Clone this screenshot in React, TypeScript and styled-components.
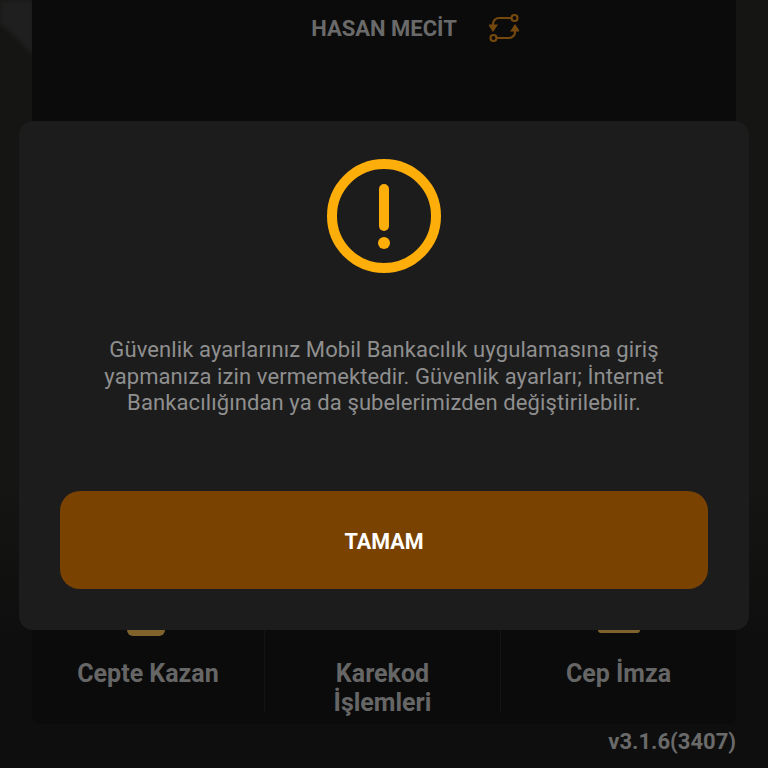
import React from "react";
import styled, { createGlobalStyle } from "styled-components";

const GlobalStyle = createGlobalStyle`
  html, body {
    margin: 0;
    padding: 0;
    background: #0e0e0e;
  }
  * {
    box-sizing: border-box;
  }
`;

const Screen = styled.div`
  position: relative;
  width: 768px;
  height: 768px;
  overflow: hidden;
  background: linear-gradient(to bottom, #151513 0, #151513 480px, #0e0e0e 640px);
  font-family: Roboto, "Liberation Sans", sans-serif;
`;

const Content = styled.div`
  position: relative;
  display: flex;
  flex-direction: column;
  width: 704px;
  height: 768px;
  margin-left: 32px;
`;

const Panel = styled.div`
  display: flex;
  flex-direction: column;
  flex: none;
  height: 724px;
  background: #0b0b0b;
  border-radius: 0 0 8px 8px;
`;

const Header = styled.div`
  display: grid;
  grid-template-columns: 1fr auto 1fr;
  align-items: center;
  height: 56px;
`;

const UserName = styled.span`
  grid-column: 2;
  font-size: 22px;
  font-weight: 700;
  color: #6a6a6a;
`;

const SwitchSlot = styled.div`
  display: flex;
  padding-left: 32px;
`;

const Spacer = styled.div`
  flex: 1;
`;

const MenuRow = styled.div`
  display: grid;
  grid-template-columns: 233px 236px 235px;
  height: 94px;
`;

const MenuItem = styled.div<{ $divider?: boolean }>`
  display: flex;
  justify-content: center;
  height: 82px;
  padding-top: 29px;
  text-align: center;
  font-size: 25px;
  font-weight: 700;
  line-height: 29px;
  color: #666666;
  border-right: ${(p) => (p.$divider ? "1px solid #141414" : "none")};
`;

const Stub = styled.div<{ $left: number; $width: number; $height: number }>`
  position: absolute;
  top: 630px;
  left: ${(p) => p.$left}px;
  width: ${(p) => p.$width}px;
  height: ${(p) => p.$height}px;
  background: #80622c;
  border-radius: 0 0 6px 6px;
`;

const Version = styled.div`
  padding-top: 5px;
  text-align: right;
  font-size: 22px;
  font-weight: 700;
  color: #6a6a6a;
`;

const EdgeShape = styled.svg`
  position: absolute;
  top: 0;
  left: 0;
  filter: blur(2px);
`;

const Backdrop = styled.div`
  position: absolute;
  top: 121px;
  left: 19px;
  width: 730px;
  height: 509px;
`;

const Modal = styled.div`
  display: flex;
  flex-direction: column;
  align-items: center;
  height: 100%;
  padding: 38px 41px 0;
  background: #1c1c1c;
  border-radius: 14px;
`;

const Message = styled.p`
  margin: 64px 0 0;
  text-align: center;
  font-size: 22px;
  font-weight: 400;
  line-height: 26.5px;
  letter-spacing: 0.1px;
  color: #8f8f8f;
`;

const OkButton = styled.button`
  flex: none;
  width: 648px;
  height: 98px;
  margin-top: 74px;
  padding-top: 4px;
  border: none;
  border-radius: 20px;
  background: #7a4200;
  color: #ffffff;
  font-family: inherit;
  font-size: 21.5px;
  font-weight: 700;
`;

const SwitchIcon = () => (
  <svg width="30" height="30" viewBox="0 0 30 30" fill="none" stroke="#75490e" strokeWidth="2.2">
    <circle cx="25.5" cy="5" r="3" />
    <circle cx="4.5" cy="25" r="3" />
    <path d="M22 5H10a6 6 0 0 0-6 6v3" />
    <path d="M1 12.5L4 17l3-4.5Z" fill="#75490e" />
    <path d="M8 25h12a6 6 0 0 0 6-6v-3" />
    <path d="M23 17.5L26 13l3 4.5Z" fill="#75490e" />
  </svg>
);

const WarningIcon = () => (
  <svg width="114" height="114" viewBox="0 0 114 114" fill="none">
    <circle cx="57" cy="57" r="52" stroke="#fdae0a" strokeWidth="10" />
    <path d="M57 30V67" stroke="#fdae0a" strokeWidth="10" strokeLinecap="round" />
    <circle cx="57" cy="84" r="6" fill="#fdae0a" />
  </svg>
);

const App = () => {
  return (
    <Screen>
      <GlobalStyle />
      <EdgeShape width="34" height="60" viewBox="0 0 34 60">
        <path d="M-4 -4H34V56C22 44 10 30 -4 22Z" fill="#1f1f1f" />
      </EdgeShape>
      <Content>
        <Panel>
          <Header>
            <UserName>HASAN MECİT</UserName>
            <SwitchSlot>
              <SwitchIcon />
            </SwitchSlot>
          </Header>
          <Spacer />
          <MenuRow>
            <MenuItem $divider>Cepte Kazan</MenuItem>
            <MenuItem $divider>
              Karekod
              <br />
              İşlemleri
            </MenuItem>
            <MenuItem>Cep İmza</MenuItem>
          </MenuRow>
        </Panel>
        <Version>v3.1.6(3407)</Version>
      </Content>
      <Stub $left={127} $width={38} $height={6} />
      <Stub $left={598} $width={42} $height={3} />
      <Backdrop>
        <Modal>
          <WarningIcon />
          <Message>
            Güvenlik ayarlarınız Mobil Bankacılık uygulamasına giriş
            <br />
            yapmanıza izin vermemektedir. Güvenlik ayarları; İnternet
            <br />
            Bankacılığından ya da şubelerimizden değiştirilebilir.
          </Message>
          <OkButton>TAMAM</OkButton>
        </Modal>
      </Backdrop>
    </Screen>
  );
};

export default App;
